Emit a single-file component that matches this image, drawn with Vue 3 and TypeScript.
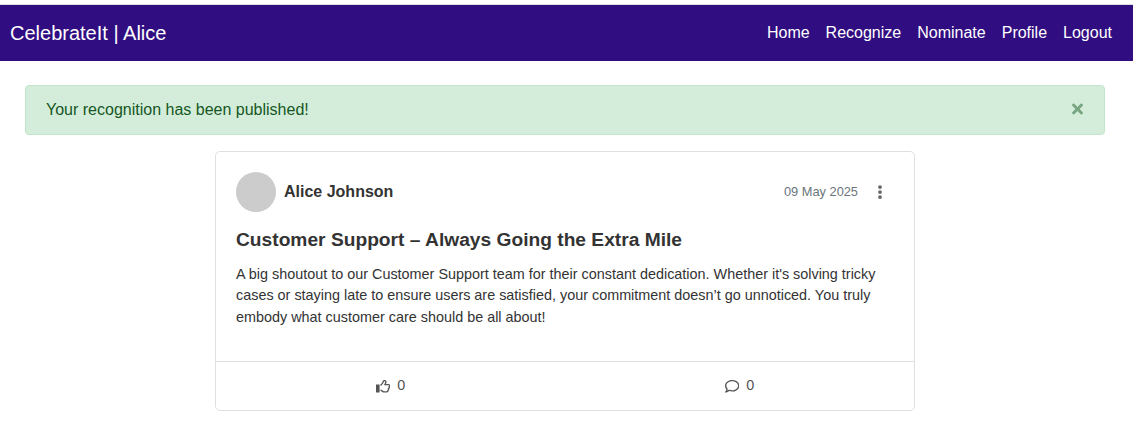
<script setup lang="ts">
import { ref } from 'vue'

const links: string[] = ['Home', 'Recognize', 'Nominate', 'Profile', 'Logout']
const showAlert = ref<boolean>(true)
const likes = ref<number>(0)
const comments = ref<number>(0)
</script>

<template>
  <div class="page">
    <header class="navbar">
      <div class="brand">CelebrateIt | Alice</div>
      <nav class="links">
        <a v-for="link in links" :key="link" class="link">{{ link }}</a>
      </nav>
    </header>

    <main class="content">
      <div v-if="showAlert" class="alert">
        <span>Your recognition has been published!</span>
        <button class="close" aria-label="Close" @click="showAlert = false">
          <svg viewBox="0 0 352 512" width="11" height="16" fill="currentColor"><path d="M242.72 256l100.07-100.07c12.28-12.28 12.28-32.19 0-44.48l-22.24-22.24c-12.28-12.28-32.19-12.28-44.48 0L176 189.28 75.93 89.21c-12.28-12.28-32.19-12.28-44.48 0L9.21 111.45c-12.28 12.28-12.28 32.19 0 44.48L109.28 256 9.21 356.07c-12.28 12.28-12.28 32.19 0 44.48l22.24 22.24c12.28 12.28 32.2 12.28 44.48 0L176 322.72l100.07 100.07c12.28 12.28 32.2 12.28 44.48 0l22.24-22.24c12.28-12.28 12.28-32.19 0-44.48L242.72 256z" /></svg>
        </button>
      </div>

      <article class="card">
        <div class="body">
          <div class="author">
            <div class="avatar"></div>
            <span class="name">Alice Johnson</span>
            <span class="date">09 May 2025</span>
            <svg class="more" viewBox="0 0 128 512" width="4" height="16" fill="currentColor"><circle cx="64" cy="96" r="60" /><circle cx="64" cy="256" r="60" /><circle cx="64" cy="416" r="60" /></svg>
          </div>
          <h2 class="title">Customer Support – Always Going the Extra Mile</h2>
          <p class="text">A big shoutout to our Customer Support team for their constant dedication. Whether it's solving tricky cases or staying late to ensure users are satisfied, your commitment doesn’t go unnoticed. You truly embody what customer care should be all about!</p>
        </div>
        <footer class="actions">
          <button class="action" @click="likes++">
            <svg viewBox="0 0 512 512" width="14.4" height="14.4" fill="currentColor"><path d="M323.8 34.8c-38.2-10.9-78.1 11.2-89 49.4l-5.7 20c-3.7 13-10.4 25-19.5 35l-51.3 56.4c-8.9 9.8-8.2 25 1.6 33.9s25 8.2 33.9-1.6l51.3-56.4c14.1-15.5 24.4-34 30.1-54.1l5.7-20c3.6-12.7 16.9-20.1 29.7-16.5s20.1 16.9 16.5 29.7l-5.7 20c-5.7 19.9-14.7 38.7-26.6 55.5c-5.2 7.3-5.8 16.9-1.7 24.9s12.3 13 21.3 13L448 224c8.8 0 16 7.2 16 16c0 6.8-4.3 12.7-10.4 15c-7.4 2.8-13 9-14.9 16.7s.1 15.8 5.3 21.7c2.5 2.8 4 6.5 4 10.6c0 7.8-5.6 14.3-13 15.7c-8.2 1.6-15.1 7.3-18 15.2s-1.6 16.7 3.6 23.3c2.1 2.7 3.4 6.1 3.4 9.9c0 6.7-4.2 12.6-10.2 14.9c-11.5 4.5-17.7 16.9-14.4 28.8c.4 1.3 .6 2.8 .6 4.3c0 8.8-7.2 16-16 16H286.5c-12.6 0-25-3.7-35.5-10.7l-61.7-41.1c-11-7.4-25.9-4.4-33.3 6.7s-4.4 25.9 6.7 33.3l61.7 41.1c18.4 12.3 40 18.8 62.1 18.8H384c34.7 0 62.9-27.6 64-62c14.6-11.7 24-29.7 24-50c0-4.5-.5-8.8-1.3-13c15.4-11.7 25.3-30.2 25.3-51c0-6.5-1-12.8-2.8-18.7C504.8 273.7 512 257.7 512 240c0-35.3-28.6-64-64-64l-92.3 0c4.7-10.4 8.7-21.2 11.8-32.2l5.7-20c10.9-38.2-11.2-78.1-49.4-89zM12 192c-6.600 0-12 5.400-12 12V468c0 6.600 5.400 12 12 12H116c6.600 0 12-5.400 12-12V204c0-6.600-5.400-12-12-12H12z" /></svg>
            <span class="count">{{ likes }}</span>
          </button>
          <button class="action" @click="comments++">
            <svg viewBox="0 0 512 512" width="14.4" height="14.4" fill="currentColor"><path d="M123.6 391.3c12.9-9.4 29.6-11.8 44.6-6.4c26.5 9.6 56.2 15.1 87.8 15.1c124.7 0 208-80.5 208-160s-83.3-160-208-160S48 160.5 48 240c0 32 12.4 62.8 35.7 89.2c8.6 9.7 12.8 22.5 11.8 35.5c-1.4 18.1-5.7 34.7-11.3 49.4c17-7.9 31.1-16.7 39.4-22.7zM21.2 431.9c1.8-2.7 3.5-5.4 5.1-8.1c10-16.6 19.5-38.4 21.4-62.9C17.7 326.8 0 285.1 0 240C0 125.1 114.6 32 256 32s256 93.1 256 208s-114.6 208-256 208c-37.1 0-72.3-6.4-104.1-17.9c-11.9 8.7-31.3 20.6-54.3 30.6c-15.1 6.6-32.3 12.6-50.1 16.1c-.8 .2-1.6 .3-2.4 .5c-4.4 .8-8.7 1.5-13.2 1.9c-.2 0-.5 .1-.7 .1c-5.1 .5-10.2 .8-15.3 .8c-6.5 0-12.3-3.9-14.8-9.9c-2.5-6-1.1-12.8 3.4-17.4c4.1-4.2 7.8-8.7 11.3-13.5c1.7-2.3 3.3-4.6 4.8-6.9l.3-.5z" /></svg>
            <span class="count">{{ comments }}</span>
          </button>
        </footer>
      </article>
    </main>
  </div>
</template>

<style>
body {
  background: #fff;
}
</style>

<style scoped>
.page,
.page * {
  box-sizing: border-box;
}
.page {
  height: 433px;
  overflow: hidden;
  padding-top: 4px;
  font-family: "Liberation Sans", Arial, sans-serif;
  font-size: 16px;
  line-height: 24px;
  color: #333;
}
button {
  border: 0;
  padding: 0;
  background: none;
  font: inherit;
}
svg {
  display: block;
  flex: none;
}
.navbar {
  height: 57px;
  display: flex;
  align-items: center;
  justify-content: space-between;
  padding: 0 21px 0 10px;
  border-top: 1px solid #dcdcdc;
  background: #300d80;
  color: #fff;
}
.brand {
  font-size: 20px;
  line-height: 30px;
}
.links {
  display: flex;
  gap: 16px;
}
.content {
  padding: 24px 28px 0 25px;
}
.alert {
  height: 50px;
  display: flex;
  align-items: center;
  justify-content: space-between;
  padding: 0 20px;
  border: 1px solid #c3e6cb;
  border-radius: 4px;
  background: #d4edda;
  color: #155724;
}
.close {
  margin: 0 1.5px 1.5px 0;
  color: #78a582;
}
.card {
  width: 700px;
  height: 260px;
  margin: 16px auto 0;
  display: flex;
  flex-direction: column;
  border: 1px solid #dfdfdf;
  border-radius: 5px;
  background: #fff;
}
.body {
  flex: 1;
  padding: 20px;
}
.author {
  display: flex;
  align-items: center;
}
.avatar {
  width: 40px;
  height: 40px;
  margin-right: 8px;
  border-radius: 50%;
  background: #ccc;
}
.name {
  font-weight: bold;
}
.date {
  margin-left: auto;
  font-size: 12.8px;
  color: #6c757d;
}
.more {
  margin: 0 12px 0 20px;
  color: #666;
}
.title {
  margin: 16px 0 11.6px;
  font-size: 19.2px;
  line-height: 24px;
}
.text {
  margin: 0;
  font-size: 14.4px;
  line-height: 21.6px;
}
.actions {
  height: 49px;
  display: flex;
  border-top: 1px solid #dfdfdf;
}
.action {
  flex: 1;
  display: flex;
  align-items: center;
  justify-content: center;
  gap: 7px;
  font-size: 14.4px;
  color: #555;
}
.count {
  padding-bottom: 2px;
}
</style>
